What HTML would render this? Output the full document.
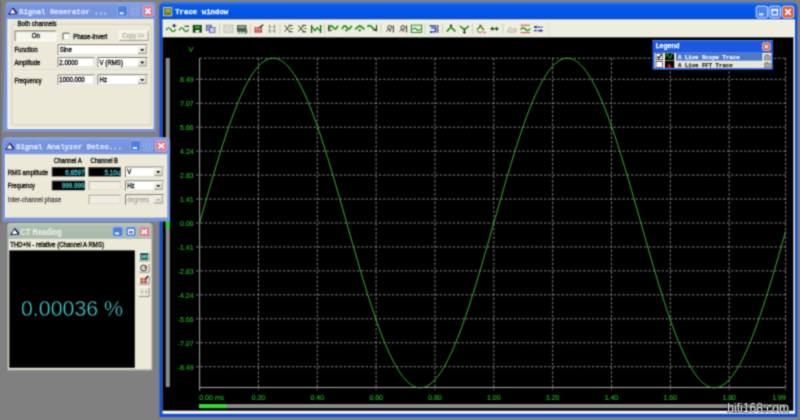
<!DOCTYPE html>
<html><head><meta charset="utf-8"><title>Trace window</title>
<style>
html,body{margin:0;padding:0;background:#808080}
body{width:800px;height:420px;overflow:hidden;position:relative}
svg{position:absolute;left:0;top:0;display:block;font-family:"Liberation Sans",sans-serif;filter:url(#soft)}
text{white-space:pre}
</style></head><body>
<svg width="800" height="420" viewBox="0 0 800 420">
<defs>
<filter id="soft" x="0" y="0" width="100%" height="100%" filterUnits="objectBoundingBox" color-interpolation-filters="sRGB"><feConvolveMatrix order="3" kernelMatrix="1 3 1 3 10 3 1 3 1" divisor="26" edgeMode="duplicate" preserveAlpha="true"/></filter>
<linearGradient id="gi" x1="0" y1="0" x2="0" y2="1"><stop offset="0" stop-color="#93a9e6"/><stop offset=".18" stop-color="#7a96df"/><stop offset=".8" stop-color="#7693de"/><stop offset="1" stop-color="#7f99e0"/></linearGradient>
<linearGradient id="ga" x1="0" y1="0" x2="0" y2="1"><stop offset="0" stop-color="#3a86f4"/><stop offset=".14" stop-color="#0a5cec"/><stop offset=".7" stop-color="#0453e2"/><stop offset="1" stop-color="#0a4fd6"/></linearGradient>
<linearGradient id="gg" x1="0" y1="0" x2="0" y2="1"><stop offset="0" stop-color="#bfccbf"/><stop offset=".2" stop-color="#adbeae"/><stop offset="1" stop-color="#a9bbab"/></linearGradient>
<linearGradient id="gbtn" x1="0" y1="0" x2="0" y2="1"><stop offset="0" stop-color="#ffffff"/><stop offset="1" stop-color="#e3e0d2"/></linearGradient>
<linearGradient id="gdd" x1="0" y1="0" x2="0" y2="1"><stop offset="0" stop-color="#f6f5ee"/><stop offset="1" stop-color="#dcd9c9"/></linearGradient>
</defs>
<rect x="0" y="0" width="800" height="420" fill="#808080" />
<rect x="0" y="0" width="1.3" height="224" fill="#707070" />
<!-- Trace window -->
<path d="M159.5 417 V7 Q159.5 2.4 164.5 2.4 H792 Q797.3 2.4 797.3 7.5 V417 Z" fill="#0b4fdc"/>
<path d="M159.5 19.6 V7 Q159.5 2.4 164.5 2.4 H792 Q797.3 2.4 797.3 7.5 V19.6 Z" fill="url(#ga)"/>
<rect x="163.6" y="7.4" width="8.2" height="8.4" fill="#5d7a2e" />
<rect x="165.4" y="8.6" width="4.8" height="4" fill="#b0a028" />
<rect x="163.6" y="7.4" width="8.2" height="8.4" fill="none" stroke="#c9d3c0" stroke-width=".9"/>
<text x="175.2" y="13.86" font-size="7.3" fill="#fff" font-weight="bold" font-family="'Liberation Mono', monospace" textLength="53.04" lengthAdjust="spacingAndGlyphs"  stroke="#fff" stroke-width=".25">Trace window</text>
<rect x="756.2" y="6.1" width="11.4" height="11.8" fill="#4a84f0" rx="1.8" stroke="#dfe7fb" stroke-width=".9"/>
<rect x="759" y="13.5" width="4.4" height="1.8" fill="#fff" />
<rect x="769" y="6.1" width="11.5" height="11.8" fill="#4a84f0" rx="1.8" stroke="#dfe7fb" stroke-width=".9"/>
<rect x="772" y="9.7" width="5.5" height="5.2" fill="none" stroke="#fff" stroke-width="1.2"/>
<rect x="771.4" y="8.9" width="6.7" height="1.8" fill="#fff" />
<rect x="782.2" y="6.1" width="11.6" height="11.8" fill="#de5a34" rx="1.8" stroke="#dfe7fb" stroke-width=".9"/>
<path d="M785.2 9.1 L790.8 14.9 M790.8 9.1 L785.2 14.9" stroke="#fff" stroke-width="1.9"/>
<rect x="162.5" y="19.6" width="632.5" height="17.9" fill="#efeddf" />
<rect x="162.5" y="19.6" width="632.5" height="1" fill="#fbfaf4" />
<rect x="548.6" y="21" width="0.8" height="15" fill="#dddace" />
<rect x="162.5" y="37.4" width="632.5" height="376.4" fill="#f4f4f4" />
<rect x="162.5" y="37.4" width="630.9" height="373.3" fill="#000" />
<g transform="translate(0 28.7) scale(1 .84) translate(0 -28.9)">
<path d="M166.4 30.2 q2.25 -4.4 4.5 0 t4.5 0" fill="none" stroke="#1f9a22" stroke-width="1.6" stroke-linecap="round"/>
<path d="M172.2 25.4 h4 M174.2 23.4 v4" stroke="#141470" stroke-width="1.2"/>
<path d="M179.4 30.2 q2.25 -4.4 4.5 0 t4.5 0" fill="none" stroke="#1f9a22" stroke-width="1.6" stroke-linecap="round"/>
<path d="M184.6 26 h4.4" stroke="#141470" stroke-width="1.3"/>
<rect x="192.8" y="24.4" width="9" height="9.2" fill="#123f14" />
<rect x="194.6" y="25.4" width="5.4" height="3.2" fill="#3f9a3c" />
<rect x="195.4" y="30.4" width="4" height="3.2" fill="#dfe6dc" />
<rect x="206.2" y="24.6" width="5.4" height="6.2" fill="#8f9bd0" stroke="#3a4a9a" stroke-width=".7"/>
<rect x="209.4" y="27.6" width="5.6" height="6.2" fill="#c4cbe8" stroke="#3a4a9a" stroke-width=".7"/>
<rect x="219.2" y="22.5" width="0.8" height="13" fill="#c9c6b8" />
<rect x="224" y="24.6" width="9" height="8.8" fill="#e4e2d6" stroke="#b5b2a4" stroke-width=".8"/>
<path d="M224.4 25 l8.2 8 M232.6 25 l-8.2 8" fill="none" stroke="#c2bfb2" stroke-width=".8"/>
<rect x="237" y="24.6" width="9.4" height="8" fill="#4d5a4b" />
<rect x="238.2" y="25.6" width="7" height="2.6" fill="#9aa69a" />
<path d="M238 34 h2 M241 34 h2 M244 34 h3 M246.6 30 v4" stroke="#1e8a22" stroke-width="1.2"/>
<rect x="250" y="22.5" width="0.8" height="13" fill="#c9c6b8" />
<rect x="254.4" y="27" width="7.6" height="6.8" fill="#c44a3e" />
<path d="M254.4 29.4 h7.6 M256.9 27 v6.8 M259.5 27 v6.8" stroke="#f3d9d4" stroke-width=".6"/>
<path d="M259.6 27.6 l3.6 -3.6" stroke="#1a1a1a" stroke-width="1.5"/>
<path d="M269.6 24.4 v9.6 M274.4 24.4 v9.6" stroke="#4a4a4a" stroke-width="1" stroke-dasharray="1.2 1"/>
<path d="M268.4 26.8 h7.4 M268.4 31.4 h7.4" stroke="#3f8a3f" stroke-width=".9" stroke-dasharray="1.2 1"/>
<rect x="279.6" y="22.5" width="0.8" height="13" fill="#c9c6b8" />
<path d="M284.6 25 l5.4 7.4 M284.6 32.4 l5.4 -7.4" stroke="#222" stroke-width="1"/>
<path d="M288.6 25 h4 M288.6 32.6 h4" stroke="#222" stroke-width="1"/>
<path d="M290 28.8 h3" stroke="#1f9a22" stroke-width="1.2"/>
<path d="M298.2 25 l5.4 7.4 M298.2 32.4 l5.4 -7.4" stroke="#222" stroke-width="1"/>
<path d="M302.2 25 h4 M302.2 32.6 h4" stroke="#222" stroke-width="1"/>
<path d="M303.6 28.8 h3" stroke="#1f9a22" stroke-width="1.2"/>
<path d="M311.6 24.4 v9.6 M320.6 24.4 v9.6" stroke="#155c1b" stroke-width="1.3"/>
<path d="M312.4 27 l2.6 4.4 l2.2 -3.8 l2.6 4" fill="none" stroke="#1f9a22" stroke-width="1.5"/>
<rect x="324" y="22.5" width="0.8" height="13" fill="#c9c6b8" />
<path d="M328.8 28.6 q2.2 -5.6 4.4 -1.2 t4.4 -1.4" fill="none" stroke="#1f9a22" stroke-width="2" stroke-linecap="round"/>
<path d="M328.8 24.2 v8 M328.8 30.8 h3.2" stroke="#222" stroke-width="1"/>
<path d="M342.4 28.6 q2.2 -5.6 4.4 -1.2 t4.4 -1.4" fill="none" stroke="#1f9a22" stroke-width="2" stroke-linecap="round"/>
<path d="M344.8 30.2 h3.4 l-1.7 2 Z" fill="#222"/>
<path d="M355.6 29 l4.2 -3.6 l4.2 3.6" fill="none" stroke="#1f9a22" stroke-width="2" stroke-linejoin="round" stroke-linecap="round"/>
<path d="M358 30.2 h3.4 l-1.7 2 Z" fill="#222"/>
<path d="M367.8 26 q2.2 -2 4.4 1.4 t4.2 1.6" fill="none" stroke="#1f9a22" stroke-width="2" stroke-linecap="round"/>
<path d="M376.6 24.2 v8 M376.6 30.8 h-3.2" stroke="#222" stroke-width="1"/>
<rect x="380.6" y="22.5" width="0.8" height="13" fill="#c9c6b8" />
<circle cx="389.8" cy="27.4" r="2.1" fill="none" stroke="#222" stroke-width="1"/>
<path d="M388.6 29.2 l-2.2 3 M393.4 25 v8.4 M388.8 31.6 h2.4" stroke="#222" stroke-width="1"/>
<circle cx="403" cy="27.4" r="2.1" fill="none" stroke="#222" stroke-width="1"/>
<path d="M401.8 29.2 l-2.2 3 M406.6 25 v8.4 M402 31.6 h2.4" stroke="#222" stroke-width="1"/>
<rect x="411.4" y="24.6" width="10.2" height="8.8" fill="#e9efe2" stroke="#2c8a2c" stroke-width="1.1"/>
<path d="M413 29.6 q1.75 -3 3.5 0 t3.5 0" fill="none" stroke="#1f9a22" stroke-width="1.5" stroke-linecap="round"/>
<rect x="424.6" y="22.5" width="0.8" height="13" fill="#c9c6b8" />
<rect x="429.4" y="24.8" width="7.2" height="1.4" fill="#1c2a9c" />
<path d="M431 28 h4.6 v4.6 h-3.4" fill="none" stroke="#1c3ad0" stroke-width="1.5"/>
<path d="M437.8 24.6 v9.4" stroke="#222" stroke-width="1"/>
<path d="M430.2 30.6 l2.6 2.6 l-2.6 1.4Z" fill="#1c3ad0"/>
<rect x="442" y="22.5" width="0.8" height="13" fill="#c9c6b8" />
<path d="M446.8 32.2 l4.2 -5.2 l4.4 5.2" fill="none" stroke="#1f9a22" stroke-width="1.9" stroke-linejoin="round"/>
<circle cx="451" cy="25.2" r="1.2" fill="#111"/>
<path d="M460 25.6 l4.4 4.6 l4.4 -4.6" fill="none" stroke="#1f9a22" stroke-width="1.9" stroke-linejoin="round"/>
<path d="M464.4 29 v5 M462.8 32.6 l1.6 1.8 l1.6 -1.8" stroke="#111" stroke-width="1" fill="none"/>
<rect x="472" y="22.5" width="0.8" height="13" fill="#c9c6b8" />
<path d="M477 30.4 l3.4 -4.6 l3.6 4.6" fill="none" stroke="#1f9a22" stroke-width="1.6"/>
<circle cx="480.4" cy="25" r="1.1" fill="#c03020"/>
<path d="M477 33 q1.2 -2 2.2 0 t2.2 0 t2.2 0 t2.2 0" fill="none" stroke="#d03020" stroke-width="1"/>
<path d="M490 29 l3 -2.6 v5.2 Z M499 29 l-3 -2.6 v5.2 Z" fill="#1b5a20"/>
<path d="M492 29 h5" stroke="#1b5a20" stroke-width="1.6"/>
<rect x="502.6" y="22.5" width="0.8" height="13" fill="#c9c6b8" />
<path d="M507.6 31.6 l2.6 -4.6 l2.6 3 l3 -1.6 v4.4 h-8 Z" fill="#e2e0d4" stroke="#a9a79b" stroke-width=".9"/>
<path d="M520.6 24.8 h9.4 M520.6 33.6 h9.4" stroke="#d0402c" stroke-width="1"/>
<path d="M521 29.4 q2.15 -3.4 4.3 0 t4.3 0" fill="none" stroke="#1f9a22" stroke-width="1.7" stroke-linecap="round"/>
<path d="M534 27 h8.6 M534 31.2 h8.6" stroke="#1c2a9c" stroke-width="1.6" stroke-dasharray="2.6 1"/>
<path d="M534 27 l2.6 -2 v4Z M542.8 31.2 l-2.6 -2 v4Z" fill="#1c2a9c"/>
</g>
<rect x="165.7" y="58" width="4.1" height="329" fill="#8c8c8c" />
<rect x="165.7" y="220.6" width="4.1" height="7.4" fill="#22d022" />
<path d="M199.6 58.2 H785.6 M196 366.7 H785.6 M196 342.75 H785.6 M196 318.8 H785.6 M196 294.85 H785.6 M196 270.9 H785.6 M196 246.95 H785.6 M196 223 H785.6 M196 199.05 H785.6 M196 175.1 H785.6 M196 151.15 H785.6 M196 127.2 H785.6 M196 103.25 H785.6 M196 79.3 H785.6 M258.44 58.2 V390 M317.28 58.2 V390 M376.12 58.2 V390 M434.96 58.2 V390 M493.8 58.2 V390 M552.64 58.2 V390 M611.48 58.2 V390 M670.32 58.2 V390 M729.16 58.2 V390 M785.6 58.2 V390" fill="none" stroke="#a6a6a6" stroke-width=".75" stroke-dasharray="2.5 1.85"/>
<path d="M199.6 58.2 V390.5 M199.6 387.5 H785.6" fill="none" stroke="#b0b0b0" stroke-width=".95"/>
<path d="M199.6 223L200.58 219.56L201.55 216.13L202.53 212.69L203.51 209.27L204.48 205.84L205.46 202.43L206.44 199.02L207.41 195.63L208.39 192.24L209.37 188.87L210.34 185.52L211.32 182.18L212.3 178.86L213.27 175.56L214.25 172.27L215.23 169.02L216.2 165.78L217.18 162.57L218.16 159.38L219.13 156.23L220.11 153.1L221.09 150L222.06 146.94L223.04 143.9L224.02 140.9L224.99 137.94L225.97 135.02L226.95 132.13L227.92 129.28L228.9 126.47L229.88 123.71L230.85 120.99L231.83 118.31L232.81 115.68L233.78 113.09L234.76 110.56L235.74 108.07L236.71 105.63L237.69 103.24L238.67 100.91L239.64 98.63L240.62 96.4L241.6 94.22L242.57 92.11L243.55 90.05L244.53 88.05L245.5 86.1L246.48 84.22L247.46 82.39L248.43 80.63L249.41 78.93L250.39 77.29L251.36 75.72L252.34 74.21L253.32 72.76L254.29 71.38L255.27 70.07L256.25 68.82L257.22 67.64L258.2 66.53L259.18 65.48L260.15 64.51L261.13 63.6L262.11 62.76L263.08 61.99L264.06 61.3L265.04 60.67L266.01 60.11L266.99 59.62L267.97 59.21L268.94 58.86L269.92 58.59L270.9 58.39L271.87 58.26L272.85 58.2L273.83 58.22L274.8 58.3L275.78 58.46L276.76 58.69L277.73 58.99L278.71 59.36L279.69 59.8L280.66 60.32L281.64 60.9L282.62 61.56L283.59 62.28L284.57 63.08L285.55 63.94L286.52 64.88L287.5 65.88L288.48 66.95L289.45 68.09L290.43 69.3L291.41 70.57L292.38 71.91L293.36 73.31L294.34 74.78L295.31 76.32L296.29 77.92L297.27 79.58L298.24 81.3L299.22 83.09L300.2 84.94L301.17 86.84L302.15 88.81L303.13 90.84L304.1 92.92L305.08 95.06L306.06 97.25L307.03 99.5L308.01 101.8L308.99 104.16L309.96 106.56L310.94 109.02L311.92 111.53L312.89 114.09L313.87 116.69L314.85 119.34L315.82 122.03L316.8 124.77L317.78 127.55L318.75 130.38L319.73 133.24L320.71 136.14L321.68 139.08L322.66 142.06L323.64 145.07L324.61 148.11L325.59 151.19L326.57 154.3L327.54 157.44L328.52 160.61L329.5 163.8L330.47 167.02L331.45 170.27L332.43 173.54L333.4 176.83L334.38 180.14L335.36 183.47L336.33 186.81L337.31 190.17L338.29 193.55L339.26 196.94L340.24 200.34L341.22 203.74L342.19 207.16L343.17 210.59L344.15 214.02L345.12 217.45L346.1 220.89L347.08 224.33L348.05 227.76L349.03 231.2L350.01 234.63L350.98 238.05L351.96 241.47L352.94 244.89L353.91 248.29L354.89 251.68L355.87 255.06L356.84 258.42L357.82 261.77L358.8 265.1L359.77 268.42L360.75 271.71L361.73 274.98L362.7 278.24L363.68 281.46L364.66 284.66L365.63 287.84L366.61 290.98L367.59 294.1L368.56 297.18L369.54 300.24L370.52 303.26L371.49 306.24L372.47 309.19L373.45 312.1L374.42 314.97L375.4 317.81L376.38 320.6L377.35 323.34L378.33 326.05L379.31 328.71L380.28 331.32L381.26 333.89L382.24 336.41L383.21 338.88L384.19 341.3L385.17 343.66L386.14 345.98L387.12 348.24L388.1 350.45L389.07 352.6L390.05 354.69L391.03 356.73L392 358.71L392.98 360.63L393.96 362.49L394.93 364.29L395.91 366.03L396.89 367.71L397.86 369.32L398.84 370.87L399.82 372.36L400.79 373.78L401.77 375.13L402.75 376.42L403.72 377.64L404.7 378.8L405.68 379.88L406.65 380.9L407.63 381.85L408.61 382.73L409.58 383.54L410.56 384.28L411.54 384.95L412.51 385.56L413.49 386.09L414.47 386.54L415.44 386.93L416.42 387.25L417.4 387.49L418.37 387.67L419.35 387.77L420.33 387.8L421.3 387.76L422.28 387.65L423.26 387.46L424.23 387.2L425.21 386.88L426.19 386.48L427.16 386.01L428.14 385.47L429.12 384.85L430.09 384.17L431.07 383.42L432.05 382.6L433.02 381.71L434 380.75L434.98 379.72L435.95 378.62L436.93 377.45L437.91 376.22L438.88 374.92L439.86 373.56L440.84 372.13L441.81 370.63L442.79 369.07L443.77 367.45L444.74 365.76L445.72 364.01L446.7 362.2L447.67 360.33L448.65 358.4L449.63 356.42L450.6 354.37L451.58 352.26L452.56 350.1L453.53 347.89L454.51 345.62L455.49 343.3L456.46 340.92L457.44 338.49L458.42 336.02L459.39 333.49L460.37 330.92L461.35 328.29L462.32 325.63L463.3 322.92L464.28 320.16L465.25 317.36L466.23 314.53L467.21 311.65L468.18 308.73L469.16 305.78L470.14 302.79L471.11 299.76L472.09 296.7L473.07 293.61L474.04 290.49L475.02 287.34L476 284.16L476.97 280.96L477.95 277.73L478.93 274.47L479.9 271.2L480.88 267.9L481.86 264.58L482.83 261.25L483.81 257.89L484.79 254.53L485.76 251.15L486.74 247.75L487.72 244.35L488.69 240.94L489.67 237.52L490.65 234.09L491.62 230.66L492.6 227.22L493.58 223.79L494.55 220.35L495.53 216.91L496.51 213.48L497.48 210.05L498.46 206.63L499.44 203.21L500.41 199.8L501.39 196.4L502.37 193.02L503.34 189.64L504.32 186.28L505.3 182.94L506.27 179.62L507.25 176.31L508.23 173.02L509.2 169.76L510.18 166.52L511.16 163.3L512.13 160.11L513.11 156.95L514.09 153.81L515.06 150.71L516.04 147.63L517.02 144.59L517.99 141.59L518.97 138.62L519.95 135.68L520.92 132.79L521.9 129.93L522.88 127.11L523.85 124.34L524.83 121.61L525.81 118.92L526.78 116.28L527.76 113.68L528.74 111.13L529.71 108.63L530.69 106.18L531.67 103.78L532.64 101.44L533.62 99.14L534.6 96.9L535.57 94.72L536.55 92.59L537.53 90.51L538.5 88.5L539.48 86.54L540.46 84.64L541.43 82.81L542.41 81.03L543.39 79.32L544.36 77.66L545.34 76.07L546.32 74.55L547.29 73.09L548.27 71.69L549.25 70.36L550.22 69.1L551.2 67.91L552.18 66.78L553.15 65.72L554.13 64.72L555.11 63.8L556.08 62.95L557.06 62.16L558.04 61.45L559.01 60.81L559.99 60.23L560.97 59.73L561.94 59.3L562.92 58.94L563.9 58.65L564.87 58.43L565.85 58.28L566.83 58.21L567.8 58.21L568.78 58.28L569.76 58.42L570.73 58.63L571.71 58.91L572.69 59.27L573.66 59.7L574.64 60.19L575.62 60.76L576.59 61.4L577.57 62.11L578.55 62.89L579.52 63.74L580.5 64.66L581.48 65.64L582.45 66.7L583.43 67.82L584.41 69.01L585.38 70.27L586.36 71.6L587.34 72.99L588.31 74.44L589.29 75.96L590.27 77.55L591.24 79.19L592.22 80.9L593.2 82.68L594.17 84.51L595.15 86.4L596.13 88.36L597.1 90.37L598.08 92.44L599.06 94.56L600.03 96.74L601.01 98.98L601.99 101.27L602.96 103.61L603.94 106.01L604.92 108.46L605.89 110.95L606.87 113.5L607.85 116.09L608.82 118.73L609.8 121.41L610.78 124.14L611.75 126.91L612.73 129.73L613.71 132.58L614.68 135.47L615.66 138.41L616.64 141.37L617.61 144.38L618.59 147.42L619.57 150.49L620.54 153.59L621.52 156.72L622.5 159.88L623.47 163.07L624.45 166.29L625.43 169.53L626.4 172.79L627.38 176.07L628.36 179.38L629.33 182.7L630.31 186.04L631.29 189.4L632.26 192.77L633.24 196.16L634.22 199.56L635.19 202.96L636.17 206.38L637.15 209.8L638.12 213.23L639.1 216.67L640.08 220.1L641.05 223.54L642.03 226.98L643.01 230.41L643.98 233.84L644.96 237.27L645.94 240.69L646.91 244.11L647.89 247.51L648.87 250.9L649.84 254.29L650.82 257.65L651.8 261.01L652.77 264.34L653.75 267.66L654.73 270.96L655.7 274.24L656.68 277.49L657.66 280.73L658.63 283.93L659.61 287.11L660.59 290.27L661.56 293.39L662.54 296.48L663.52 299.54L664.49 302.57L665.47 305.56L666.45 308.52L667.42 311.44L668.4 314.32L669.38 317.16L670.35 319.96L671.33 322.72L672.31 325.44L673.28 328.11L674.26 330.73L675.24 333.31L676.21 335.84L677.19 338.32L678.17 340.75L679.14 343.13L680.12 345.45L681.1 347.73L682.07 349.95L683.05 352.11L684.03 354.22L685 356.27L685.98 358.26L686.96 360.2L687.93 362.07L688.91 363.89L689.89 365.64L690.86 367.33L691.84 368.96L692.82 370.52L693.79 372.02L694.77 373.46L695.75 374.83L696.72 376.13L697.7 377.37L698.68 378.54L699.65 379.64L700.63 380.67L701.61 381.64L702.58 382.54L703.56 383.36L704.54 384.12L705.51 384.81L706.49 385.42L707.47 385.97L708.44 386.45L709.42 386.85L710.4 387.18L711.37 387.44L712.35 387.63L713.33 387.75L714.3 387.8L715.28 387.77L716.26 387.68L717.23 387.51L718.21 387.27L719.19 386.96L720.16 386.57L721.14 386.12L722.12 385.6L723.09 385L724.07 384.33L725.05 383.6L726.02 382.79L727 381.92L727.98 380.97L728.95 379.96L729.93 378.88L730.91 377.73L731.88 376.51L732.86 375.23L733.84 373.88L734.81 372.46L735.79 370.98L736.77 369.43L737.74 367.82L738.72 366.15L739.7 364.42L740.67 362.62L741.65 360.77L742.63 358.85L743.6 356.88L744.58 354.84L745.56 352.75L746.53 350.6L747.51 348.4L748.49 346.14L749.46 343.83L750.44 341.47L751.42 339.05L752.39 336.59L753.37 334.07L754.35 331.51L755.32 328.9L756.3 326.24L757.28 323.54L758.25 320.79L759.23 318.01L760.21 315.18L761.18 312.31L762.16 309.4L763.14 306.45L764.11 303.47L765.09 300.46L766.07 297.4L767.04 294.32L768.02 291.21L769 288.06L769.97 284.89L770.95 281.69L771.93 278.47L772.9 275.22L773.88 271.95L774.86 268.65L775.83 265.34L776.81 262.01L777.79 258.66L778.76 255.3L779.74 251.92L780.72 248.53L781.69 245.13L782.67 241.72L783.65 238.3L784.62 234.87L785.6 231.44" fill="none" stroke="#3cbd3a" stroke-width=".95" stroke-linejoin="round"/>
<text x="191" y="52.21" font-size="7.3" fill="#1cb21c" text-anchor="middle"  stroke="#1cb21c" stroke-width=".15">V</text>
<text x="193.6" y="82.41" font-size="7.3" fill="#1cb21c" text-anchor="end" textLength="13.49" lengthAdjust="spacingAndGlyphs"  stroke="#1cb21c" stroke-width=".15">8.49</text>
<text x="193.6" y="106.36" font-size="7.3" fill="#1cb21c" text-anchor="end" textLength="13.49" lengthAdjust="spacingAndGlyphs"  stroke="#1cb21c" stroke-width=".15">7.07</text>
<text x="193.6" y="130.31" font-size="7.3" fill="#1cb21c" text-anchor="end" textLength="13.49" lengthAdjust="spacingAndGlyphs"  stroke="#1cb21c" stroke-width=".15">5.66</text>
<text x="193.6" y="154.26" font-size="7.3" fill="#1cb21c" text-anchor="end" textLength="13.49" lengthAdjust="spacingAndGlyphs"  stroke="#1cb21c" stroke-width=".15">4.24</text>
<text x="193.6" y="178.21" font-size="7.3" fill="#1cb21c" text-anchor="end" textLength="13.49" lengthAdjust="spacingAndGlyphs"  stroke="#1cb21c" stroke-width=".15">2.83</text>
<text x="193.6" y="202.16" font-size="7.3" fill="#1cb21c" text-anchor="end" textLength="13.49" lengthAdjust="spacingAndGlyphs"  stroke="#1cb21c" stroke-width=".15">1.41</text>
<text x="193.6" y="226.11" font-size="7.3" fill="#1cb21c" text-anchor="end" textLength="13.49" lengthAdjust="spacingAndGlyphs"  stroke="#1cb21c" stroke-width=".15">0.00</text>
<text x="193.6" y="250.06" font-size="7.3" fill="#1cb21c" text-anchor="end" textLength="15.81" lengthAdjust="spacingAndGlyphs"  stroke="#1cb21c" stroke-width=".15">-1.41</text>
<text x="193.6" y="274.01" font-size="7.3" fill="#1cb21c" text-anchor="end" textLength="15.81" lengthAdjust="spacingAndGlyphs"  stroke="#1cb21c" stroke-width=".15">-2.83</text>
<text x="193.6" y="297.96" font-size="7.3" fill="#1cb21c" text-anchor="end" textLength="15.81" lengthAdjust="spacingAndGlyphs"  stroke="#1cb21c" stroke-width=".15">-4.24</text>
<text x="193.6" y="321.91" font-size="7.3" fill="#1cb21c" text-anchor="end" textLength="15.81" lengthAdjust="spacingAndGlyphs"  stroke="#1cb21c" stroke-width=".15">-5.66</text>
<text x="193.6" y="345.86" font-size="7.3" fill="#1cb21c" text-anchor="end" textLength="15.81" lengthAdjust="spacingAndGlyphs"  stroke="#1cb21c" stroke-width=".15">-7.07</text>
<text x="193.6" y="369.81" font-size="7.3" fill="#1cb21c" text-anchor="end" textLength="15.81" lengthAdjust="spacingAndGlyphs"  stroke="#1cb21c" stroke-width=".15">-8.49</text>
<text x="199.3" y="399.71" font-size="7.3" fill="#1cb21c" textLength="24.67" lengthAdjust="spacingAndGlyphs"  stroke="#1cb21c" stroke-width=".15">0.00 ms</text>
<text x="258.44" y="399.71" font-size="7.3" fill="#1cb21c" text-anchor="middle" textLength="13.49" lengthAdjust="spacingAndGlyphs"  stroke="#1cb21c" stroke-width=".15">0.20</text>
<text x="317.28" y="399.71" font-size="7.3" fill="#1cb21c" text-anchor="middle" textLength="13.49" lengthAdjust="spacingAndGlyphs"  stroke="#1cb21c" stroke-width=".15">0.40</text>
<text x="376.12" y="399.71" font-size="7.3" fill="#1cb21c" text-anchor="middle" textLength="13.49" lengthAdjust="spacingAndGlyphs"  stroke="#1cb21c" stroke-width=".15">0.60</text>
<text x="434.96" y="399.71" font-size="7.3" fill="#1cb21c" text-anchor="middle" textLength="13.49" lengthAdjust="spacingAndGlyphs"  stroke="#1cb21c" stroke-width=".15">0.80</text>
<text x="493.8" y="399.71" font-size="7.3" fill="#1cb21c" text-anchor="middle" textLength="13.49" lengthAdjust="spacingAndGlyphs"  stroke="#1cb21c" stroke-width=".15">1.00</text>
<text x="552.64" y="399.71" font-size="7.3" fill="#1cb21c" text-anchor="middle" textLength="13.49" lengthAdjust="spacingAndGlyphs"  stroke="#1cb21c" stroke-width=".15">1.20</text>
<text x="611.48" y="399.71" font-size="7.3" fill="#1cb21c" text-anchor="middle" textLength="13.49" lengthAdjust="spacingAndGlyphs"  stroke="#1cb21c" stroke-width=".15">1.40</text>
<text x="670.32" y="399.71" font-size="7.3" fill="#1cb21c" text-anchor="middle" textLength="13.49" lengthAdjust="spacingAndGlyphs"  stroke="#1cb21c" stroke-width=".15">1.60</text>
<text x="729.16" y="399.71" font-size="7.3" fill="#1cb21c" text-anchor="middle" textLength="13.49" lengthAdjust="spacingAndGlyphs"  stroke="#1cb21c" stroke-width=".15">1.80</text>
<text x="785.8" y="399.71" font-size="7.3" fill="#1cb21c" text-anchor="end" textLength="13.49" lengthAdjust="spacingAndGlyphs"  stroke="#1cb21c" stroke-width=".15">1.99</text>
<rect x="199" y="404.1" width="587" height="4" fill="#8c8c8c" />
<rect x="199" y="404.1" width="27.2" height="4" fill="#2fe02f" />
<rect x="652.4" y="40" width="120.6" height="29.8" fill="#1d58e0" />
<rect x="652.4" y="40" width="120.6" height="1" fill="#4a86f2" />
<text x="655.4" y="48.46" font-size="7.3" fill="#fff" font-weight="bold" font-family="'Liberation Mono', monospace" textLength="24" lengthAdjust="spacingAndGlyphs"  stroke="#fff" stroke-width=".25">Legend</text>
<rect x="762.6" y="42.8" width="7.6" height="7.6" fill="#d8553a" rx="1" stroke="#f0e6e0" stroke-width=".8"/>
<path d="M764.6 44.8 l3.6 3.6 M768.2 44.8 l-3.6 3.6" stroke="#fff" stroke-width="1.2"/>
<rect x="654.4" y="52.8" width="117" height="8" fill="#f3f1e6" />
<rect x="654.4" y="60.8" width="117" height="7.4" fill="#e9e6d8" />
<rect x="676" y="53" width="86.4" height="7.6" fill="#4c7acb" />
<rect x="656" y="53.6" width="6.4" height="6" fill="#fff" stroke="#4a4a44" stroke-width=".8"/>
<rect x="656" y="61.4" width="6.4" height="6" fill="#fff" stroke="#4a4a44" stroke-width=".8"/>
<path d="M657.2 56.4 l1.6 1.8 l2.8 -3.8" fill="none" stroke="#111" stroke-width="1.2"/>
<rect x="665" y="53.2" width="9.2" height="7.2" fill="#000" />
<rect x="665" y="61" width="9.2" height="7" fill="#000" />
<path d="M665.8 57.4 q1.1 -6.6 2.6 -2 q1.4 6 2.8 .6 q1 -4.4 2.4 -1.4" fill="none" stroke="#2fd02f" stroke-width="1"/>
<path d="M665.6 67.8 l2 -1.6 l1.4 -3.8 l1.6 3.6 l3 1.8 Z" fill="#c8261e"/>
<text x="678" y="58.82" font-size="6.2" fill="#eef2fb" font-weight="bold" font-family="'Liberation Mono', monospace" textLength="61.56" lengthAdjust="spacingAndGlyphs"  stroke="#eef2fb" stroke-width=".25">A Live Scope Trace</text>
<text x="678" y="66.52" font-size="6.2" fill="#2a2a2a" font-weight="bold" font-family="'Liberation Mono', monospace" textLength="54.72" lengthAdjust="spacingAndGlyphs"  stroke="#2a2a2a" stroke-width=".25">A Live FFT Trace</text>
<rect x="763.2" y="53.4" width="8" height="7" fill="#eceadf" />
<rect x="764.6" y="55.8" width="6" height="4.2" fill="#a9a9a2" stroke="#6e6e68" stroke-width=".6"/>
<rect x="765.4" y="54.2" width="3" height="1.8" fill="#8c8c86" />
<rect x="763.2" y="61.2" width="8" height="7" fill="#eceadf" />
<rect x="764.6" y="63.6" width="6" height="4.2" fill="#a9a9a2" stroke="#6e6e68" stroke-width=".6"/>
<rect x="765.4" y="62" width="3" height="1.8" fill="#8c8c86" />
<text x="727.2" y="411.6" font-size="12" fill="#ffffff" stroke="#000" stroke-width="1.1" paint-order="stroke" textLength="62" lengthAdjust="spacingAndGlyphs">hifi168.com</text>
<!-- Signal Generator -->
<path d="M3 131.8 L5.4 19.2 V6.4 Q5.4 2.2 9.8 2.2 H151.6 Q155.8 2.2 155.8 6.4 V131.8 Z" fill="#7895de"/>
<path d="M5.4 19.2 V6.4 Q5.4 2.2 9.8 2.2 H151.6 Q155.8 2.2 155.8 6.4 V19.2 Z" fill="url(#gi)"/>
<rect x="7.7" y="19.2" width="145.7" height="109.8" fill="#fbfaf5" />
<rect x="7.7" y="19.2" width="145.7" height="108.7" fill="#ece9d8" />
<rect x="7.7" y="19.2" width="0.9" height="109" fill="#fbfaf5" />
<path d="M9.1 13.9 L12.7 7.9 L16.6 13.9 Z" fill="#fff" stroke="#2c2266" stroke-width="1" stroke-linejoin="round"/>
<path d="M12.8 8.1 L16.8 13.3" stroke="#241a5a" stroke-width="1.5"/>
<circle cx="9.2" cy="13.9" r=".8" fill="#1a1450"/>
<text x="19" y="13.56" font-size="7.3" fill="#dbe4f8" font-weight="bold" font-family="'Liberation Mono', monospace" textLength="88.4" lengthAdjust="spacingAndGlyphs"  stroke="#dbe4f8" stroke-width=".25">Signal Generator ...</text>
<rect x="117.4" y="5.7" width="10" height="10.5" fill="#4f7ddd" rx="1.5" stroke="#a9bdf0" stroke-width=".7"/>
<rect x="119.6" y="12.4" width="4" height="1.8" fill="#fff" />
<rect x="130.2" y="5.7" width="9.4" height="10.5" fill="#7f9be1" rx="1.5" stroke="#9db2ea" stroke-width=".7"/>
<rect x="132.8" y="8.7" width="4.2" height="4.9" fill="none" stroke="#9bb0ea" stroke-width="1"/>
<rect x="142.9" y="5.7" width="10.1" height="10.5" fill="#d77b8f" rx="1.5" stroke="#e9c3d2" stroke-width=".7"/>
<path d="M145.5 8.3 L150.4 13.6 M150.4 8.3 L145.5 13.6" stroke="#fff" stroke-width="1.7"/>
<rect x="11.9" y="24.2" width="139.3" height="100.8" rx="2" fill="none" stroke="#cfccba" stroke-width=".9"/>
<rect x="15.8" y="22" width="42.6" height="5" fill="#ece9d8" />
<text x="17.4" y="26.37" font-size="6.9" fill="#111" textLength="39.3" lengthAdjust="spacingAndGlyphs"  stroke="#111" stroke-width=".34">Both channels</text>
<rect x="14.6" y="30.6" width="41.6" height="10.6" fill="#f5f4ec" />
<path d="M15 41.2 V31 H56.2" fill="none" stroke="#6e6e64" stroke-width="1"/>
<path d="M55.8 31.4 V40.8 H15.6" fill="none" stroke="#fdfdfa" stroke-width="1"/>
<text x="35.9" y="38.27" font-size="6.9" fill="#111" text-anchor="middle" textLength="8.14" lengthAdjust="spacingAndGlyphs"  stroke="#111" stroke-width=".34">On</text>
<rect x="62.6" y="32.8" width="6.8" height="7" fill="#fff" />
<path d="M63 39.8 V33.2 H69.4" fill="none" stroke="#4c4c46" stroke-width="1"/>
<path d="M69 33.8 V39.4 H63.6" fill="none" stroke="#d8d6ca" stroke-width=".9"/>
<text x="73.2" y="38.57" font-size="6.9" fill="#111" textLength="34.1" lengthAdjust="spacingAndGlyphs"  stroke="#111" stroke-width=".34">Phase-invert</text>
<rect x="118.8" y="30.6" width="29.8" height="10.2" fill="#f1efe5" />
<path d="M119.2 40.6 V31 H148.4" fill="none" stroke="#fdfdfa" stroke-width="1"/>
<path d="M148.2 31.2 V40.4 H119.4" fill="none" stroke="#9f9d90" stroke-width="1"/>
<text x="122.6" y="38.27" font-size="6.9" fill="#b7b4a6" textLength="21.8" lengthAdjust="spacingAndGlyphs"  stroke="#b7b4a6" stroke-width=".34">Copy &gt;&gt;</text>
<text x="14.4" y="52.27" font-size="6.9" fill="#111" textLength="23.2" lengthAdjust="spacingAndGlyphs"  stroke="#111" stroke-width=".34">Function</text>
<rect x="57.5" y="44.2" width="90.1" height="10.6" fill="#fff" />
<path d="M58 54.8 V44.7 H147.6" fill="none" stroke="#7d7d74" stroke-width="1"/>
<path d="M147.1 45.2 V54.3 H58.5" fill="none" stroke="#dfddd0" stroke-width="1"/>
<rect x="138.2" y="45.4" width="8.2" height="8.2" fill="url(#gdd)" />
<path d="M146.2 45.6 V53.4 H138.2" fill="none" stroke="#8e8c80" stroke-width=".8"/>
<path d="M140.2 48.9 h4.2 l-2.1 2.3 Z" fill="#111"/>
<text x="59.7" y="52.17" font-size="6.9" fill="#111" textLength="12.21" lengthAdjust="spacingAndGlyphs"  stroke="#111" stroke-width=".34">Sine</text>
<text x="14.4" y="64.67" font-size="6.9" fill="#111" textLength="25.8" lengthAdjust="spacingAndGlyphs"  stroke="#111" stroke-width=".34">Amplitude</text>
<rect x="57.5" y="57.2" width="36.7" height="10" fill="#fff" />
<path d="M58 67.2 V57.7 H94.2" fill="none" stroke="#7d7d74" stroke-width="1"/>
<path d="M93.7 58.2 V66.7 H58.5" fill="none" stroke="#dfddd0" stroke-width="1"/>
<text x="59.3" y="64.87" font-size="6.9" fill="#111" textLength="18.65" lengthAdjust="spacingAndGlyphs"  stroke="#111" stroke-width=".34">2.0000</text>
<rect x="97.4" y="57" width="50.2" height="10.4" fill="#fff" />
<path d="M97.9 67.4 V57.5 H147.6" fill="none" stroke="#7d7d74" stroke-width="1"/>
<path d="M147.1 58 V66.9 H98.4" fill="none" stroke="#dfddd0" stroke-width="1"/>
<rect x="138.2" y="58.2" width="8.2" height="8" fill="url(#gdd)" />
<path d="M146.2 58.4 V66 H138.2" fill="none" stroke="#8e8c80" stroke-width=".8"/>
<path d="M140.2 61.6 h4.2 l-2.1 2.3 Z" fill="#111"/>
<text x="99.6" y="64.87" font-size="6.9" fill="#111" textLength="23.38" lengthAdjust="spacingAndGlyphs"  stroke="#111" stroke-width=".34">V (RMS)</text>
<rect x="12.4" y="69.7" width="138.4" height="0.8" fill="#cbc8b7" />
<rect x="12.4" y="70.5" width="138.4" height="0.7" fill="#faf9f3" />
<text x="14.4" y="82.57" font-size="6.9" fill="#111" textLength="27.2" lengthAdjust="spacingAndGlyphs"  stroke="#111" stroke-width=".34">Frequency</text>
<rect x="57.5" y="74.4" width="36.7" height="10.2" fill="#fff" />
<path d="M58 84.6 V74.9 H94.2" fill="none" stroke="#7d7d74" stroke-width="1"/>
<path d="M93.7 75.4 V84.1 H58.5" fill="none" stroke="#dfddd0" stroke-width="1"/>
<text x="59.3" y="82.17" font-size="6.9" fill="#111" textLength="25.44" lengthAdjust="spacingAndGlyphs"  stroke="#111" stroke-width=".34">1000.000</text>
<rect x="97.4" y="74.2" width="50.2" height="10.6" fill="#fff" />
<path d="M97.9 84.8 V74.7 H147.6" fill="none" stroke="#7d7d74" stroke-width="1"/>
<path d="M147.1 75.2 V84.3 H98.4" fill="none" stroke="#dfddd0" stroke-width="1"/>
<rect x="138.2" y="75.4" width="8.2" height="8.2" fill="url(#gdd)" />
<path d="M146.2 75.6 V83.4 H138.2" fill="none" stroke="#8e8c80" stroke-width=".8"/>
<path d="M140.2 78.9 h4.2 l-2.1 2.3 Z" fill="#111"/>
<text x="99.6" y="82.17" font-size="6.9" fill="#111" textLength="7.45" lengthAdjust="spacingAndGlyphs"  stroke="#111" stroke-width=".34">Hz</text>
<!-- Signal Analyzer -->
<path d="M2.6 221.4 V141.8 Q2.6 137.6 7 137.6 H165.8 Q170.1 137.6 170.1 141.8 V221.4 Z" fill="#7895de"/>
<path d="M2.6 154.2 V141.8 Q2.6 137.6 7 137.6 H165.8 Q170.1 137.6 170.1 141.8 V154.2 Z" fill="url(#gi)"/>
<rect x="5" y="154.2" width="162.3" height="63.4" fill="#ece9d8" />
<rect x="5" y="154.2" width="0.9" height="63.4" fill="#fbfaf5" />
<path d="M6.1 149.2 L9.7 143.2 L13.6 149.2 Z" fill="#fff" stroke="#2c2266" stroke-width="1" stroke-linejoin="round"/>
<path d="M9.8 143.4 L13.8 148.6" stroke="#241a5a" stroke-width="1.5"/>
<circle cx="6.2" cy="149.2" r=".8" fill="#1a1450"/>
<text x="16" y="148.76" font-size="7.3" fill="#dbe4f8" font-weight="bold" font-family="'Liberation Mono', monospace" textLength="106.08" lengthAdjust="spacingAndGlyphs"  stroke="#dbe4f8" stroke-width=".25">Signal Analyzer Detec...</text>
<rect x="130.6" y="140.7" width="10" height="10.2" fill="#4f7ddd" rx="1.5" stroke="#a9bdf0" stroke-width=".7"/>
<rect x="132.8" y="147.1" width="4" height="1.8" fill="#fff" />
<rect x="143.2" y="140.7" width="9.4" height="10.2" fill="#7f9be1" rx="1.5" stroke="#9db2ea" stroke-width=".7"/>
<rect x="145.8" y="143.7" width="4.2" height="4.6" fill="none" stroke="#9bb0ea" stroke-width="1"/>
<rect x="155.6" y="140.7" width="11.3" height="10.2" fill="#d77b8f" rx="1.5" stroke="#e9c3d2" stroke-width=".7"/>
<path d="M158.2 143.3 L164.3 148.3 M164.3 143.3 L158.2 148.3" stroke="#fff" stroke-width="1.7"/>
<text x="53.8" y="163.07" font-size="6.9" fill="#111" textLength="28.1" lengthAdjust="spacingAndGlyphs"  stroke="#111" stroke-width=".34">Channel A</text>
<text x="90.6" y="163.07" font-size="6.9" fill="#111" textLength="27.4" lengthAdjust="spacingAndGlyphs"  stroke="#111" stroke-width=".34">Channel B</text>
<text x="7.8" y="174.67" font-size="6.9" fill="#111" textLength="40.2" lengthAdjust="spacingAndGlyphs"  stroke="#111" stroke-width=".34">RMS amplitude</text>
<rect x="51.9" y="167.2" width="32.9" height="9.2" fill="#000" />
<path d="M52.3 176.4 V167.6 H84.8" fill="none" stroke="#55554e" stroke-width=".8"/>
<text x="84.6" y="174.68" font-size="7.2" fill="#3cc2cc" text-anchor="end" textLength="19.35" lengthAdjust="spacingAndGlyphs"  stroke="#3cc2cc" stroke-width=".34">6.8597</text>
<rect x="88.5" y="167.2" width="32.1" height="9.2" fill="#000" />
<path d="M88.9 176.4 V167.6 H120.6" fill="none" stroke="#55554e" stroke-width=".8"/>
<text x="120.4" y="174.68" font-size="7.2" fill="#3cc2cc" text-anchor="end" textLength="15.84" lengthAdjust="spacingAndGlyphs"  stroke="#3cc2cc" stroke-width=".34">5.10u</text>
<rect x="125" y="166.5" width="38.6" height="10.4" fill="#fff" />
<path d="M125.5 176.9 V167 H163.6" fill="none" stroke="#7d7d74" stroke-width="1"/>
<path d="M163.1 167.5 V176.4 H126" fill="none" stroke="#dfddd0" stroke-width="1"/>
<rect x="154.2" y="167.7" width="8.2" height="8" fill="url(#gdd)" />
<path d="M162.2 167.9 V175.5 H154.2" fill="none" stroke="#8e8c80" stroke-width=".8"/>
<path d="M156.2 171.1 h4.2 l-2.1 2.3 Z" fill="#111"/>
<text x="127.2" y="174.37" font-size="6.9" fill="#111" textLength="4.08" lengthAdjust="spacingAndGlyphs"  stroke="#111" stroke-width=".34">V</text>
<text x="7.8" y="188.07" font-size="6.9" fill="#111" textLength="27.2" lengthAdjust="spacingAndGlyphs"  stroke="#111" stroke-width=".34">Frequency</text>
<rect x="51.9" y="180.8" width="32.9" height="9.4" fill="#000" />
<path d="M52.3 190.2 V181.2 H84.8" fill="none" stroke="#55554e" stroke-width=".8"/>
<text x="84.6" y="188.38" font-size="7.2" fill="#3cc2cc" text-anchor="end" textLength="22.87" lengthAdjust="spacingAndGlyphs"  stroke="#3cc2cc" stroke-width=".34">999.999</text>
<rect x="88.5" y="180.8" width="32.1" height="9.4" fill="#efede2" />
<path d="M89 190.2 V181.3 H120.6" fill="none" stroke="#a8a69a" stroke-width="1"/>
<path d="M120.1 181.8 V189.7 H89.5" fill="none" stroke="#dfddd0" stroke-width="1"/>
<rect x="125" y="180.3" width="38.6" height="10.4" fill="#fff" />
<path d="M125.5 190.7 V180.8 H163.6" fill="none" stroke="#7d7d74" stroke-width="1"/>
<path d="M163.1 181.3 V190.2 H126" fill="none" stroke="#dfddd0" stroke-width="1"/>
<rect x="154.2" y="181.5" width="8.2" height="8" fill="url(#gdd)" />
<path d="M162.2 181.7 V189.3 H154.2" fill="none" stroke="#8e8c80" stroke-width=".8"/>
<path d="M156.2 184.9 h4.2 l-2.1 2.3 Z" fill="#111"/>
<text x="127.2" y="188.17" font-size="6.9" fill="#111" textLength="7.45" lengthAdjust="spacingAndGlyphs"  stroke="#111" stroke-width=".34">Hz</text>
<text x="7.8" y="202.07" font-size="6.9" fill="#5c5c55" textLength="53.2" lengthAdjust="spacingAndGlyphs"  stroke="#5c5c55" stroke-width=".34">Inter-channel phase</text>
<rect x="88.5" y="194.6" width="32.1" height="9.4" fill="#efede2" />
<path d="M89 204 V195.1 H120.6" fill="none" stroke="#a8a69a" stroke-width="1"/>
<path d="M120.1 195.6 V203.5 H89.5" fill="none" stroke="#dfddd0" stroke-width="1"/>
<rect x="125" y="194.1" width="38.6" height="10.4" fill="#efede2" />
<path d="M125.5 204.5 V194.6 H163.6" fill="none" stroke="#7d7d74" stroke-width="1"/>
<path d="M163.1 195.1 V204 H126" fill="none" stroke="#dfddd0" stroke-width="1"/>
<rect x="154.2" y="195.3" width="8.2" height="8" fill="url(#gdd)" />
<path d="M162.2 195.5 V203.1 H154.2" fill="none" stroke="#8e8c80" stroke-width=".8"/>
<path d="M156.2 198.7 h4.2 l-2.1 2.3 Z" fill="#a9a798"/>
<text x="127.2" y="201.97" font-size="6.9" fill="#b3b0a2" textLength="22.04" lengthAdjust="spacingAndGlyphs"  stroke="#b3b0a2" stroke-width=".34">degrees</text>
<!-- CT Reading -->
<path d="M7.4 370.6 V227 Q7.4 223 11.4 223 H148.2 Q152.3 223 152.3 227 V370.6 Z" fill="#a6b6a7"/>
<path d="M7.4 238.8 V227 Q7.4 223 11.4 223 H148.2 Q152.3 223 152.3 227 V238.8 Z" fill="url(#gg)"/>
<rect x="8.6" y="238.8" width="142.8" height="130.4" fill="#ece9d8" />
<path d="M11.1 234.4 L14.7 228.4 L18.6 234.4 Z" fill="#fff" stroke="#2c2266" stroke-width="1" stroke-linejoin="round"/>
<path d="M14.8 228.6 L18.8 233.8" stroke="#241a5a" stroke-width="1.5"/>
<circle cx="11.2" cy="234.4" r=".8" fill="#1a1450"/>
<text x="20.6" y="234.54" font-size="8.2" fill="#f1f5f0" font-weight="bold" textLength="41.3" lengthAdjust="spacingAndGlyphs" >CT Reading</text>
<rect x="112.8" y="227" width="9.9" height="9.3" fill="#4f7ddd" rx="1.5" stroke="#a9bdf0" stroke-width=".7"/>
<rect x="115" y="232.5" width="4" height="1.8" fill="#fff" />
<rect x="126" y="227" width="9.8" height="9.3" fill="#4f7ddd" rx="1.5" stroke="#a9bdf0" stroke-width=".7"/>
<rect x="128.4" y="230" width="5" height="3.9" fill="none" stroke="#fff" stroke-width="1.1"/>
<rect x="128" y="229.4" width="5.8" height="1.6" fill="#fff" />
<rect x="139" y="227" width="10.6" height="9.3" fill="#d77b8f" rx="1.5" stroke="#e9c3d2" stroke-width=".7"/>
<path d="M141.6 229.6 L147 233.7 M147 229.6 L141.6 233.7" stroke="#fff" stroke-width="1.7"/>
<text x="10.2" y="246.97" font-size="6.9" fill="#111" textLength="93.8" lengthAdjust="spacingAndGlyphs"  stroke="#111" stroke-width=".34">THD+N - relative (Channel A RMS)</text>
<rect x="9.3" y="250.4" width="125.5" height="117.4" fill="#000" />
<text x="21" y="316.28" font-size="22.3" fill="#3fd3d6" textLength="102" lengthAdjust="spacingAndGlyphs" stroke="#000" stroke-width=".45">0.00036 %</text>
<rect x="138.6" y="251.8" width="11" height="9.4" fill="#e6e3d4" />
<path d="M139 261.2 V252.2 H149.6" fill="none" stroke="#fbfaf4" stroke-width=".9"/>
<path d="M149.2 252.4 V260.8 H139" fill="none" stroke="#8d8b7e" stroke-width=".9"/>
<rect x="140.2" y="253.2" width="7.8" height="6.4" fill="#0d3f3f" />
<text x="144.1" y="258.08" font-size="4.4" fill="#6fe0e0" text-anchor="middle"  stroke="#6fe0e0" stroke-width=".34">100</text>
<rect x="138.6" y="263.4" width="11" height="9.2" fill="#e6e3d4" />
<path d="M139 272.6 V263.8 H149.6" fill="none" stroke="#fbfaf4" stroke-width=".9"/>
<path d="M149.2 264 V272.2 H139" fill="none" stroke="#8d8b7e" stroke-width=".9"/>
<circle cx="143.6" cy="268" r="2.9" fill="none" stroke="#333" stroke-width="1"/>
<path d="M143.6 268 l3.4 -1.6" stroke="#b03030" stroke-width="1"/>
<rect x="138.6" y="275.4" width="11" height="9.2" fill="#e6e3d4" />
<path d="M139 284.6 V275.8 H149.6" fill="none" stroke="#fbfaf4" stroke-width=".9"/>
<path d="M149.2 276 V284.2 H139" fill="none" stroke="#8d8b7e" stroke-width=".9"/>
<rect x="140.4" y="278.2" width="6.6" height="5" fill="#c44a3e" />
<path d="M140.4 280.4 h6.6 M143.6 278.2 v5" stroke="#f3d9d4" stroke-width=".6"/>
<path d="M145.6 278.6 l2.8 -2.6" stroke="#1a1a1a" stroke-width="1.3"/>
<rect x="138.6" y="287" width="11" height="10" fill="#e6e3d4" />
<path d="M139 297 V287.4 H149.6" fill="none" stroke="#fbfaf4" stroke-width=".9"/>
<path d="M149.2 287.6 V296.6 H139" fill="none" stroke="#8d8b7e" stroke-width=".9"/>
<circle cx="142" cy="292" r=".9" fill="#a8a698"/><circle cx="146.4" cy="292" r=".9" fill="#a8a698"/>
</svg>
</body></html>
